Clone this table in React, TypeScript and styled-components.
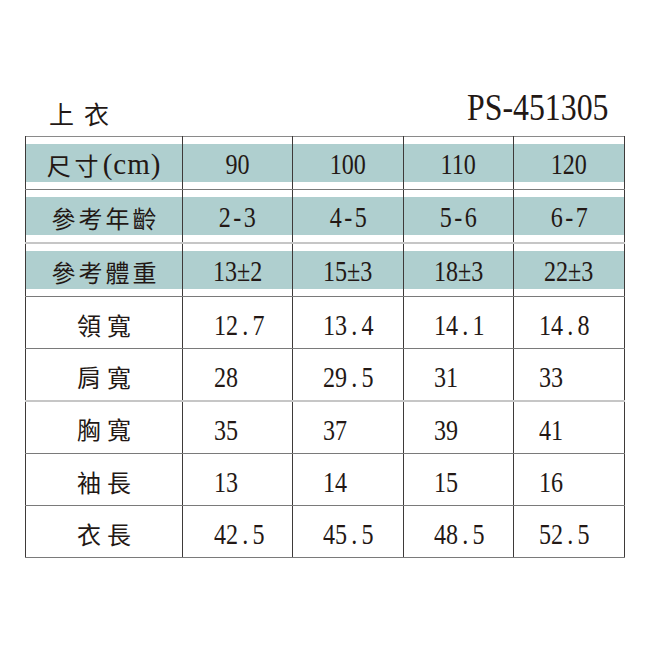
import React from "react";
import styled, { createGlobalStyle } from "styled-components";

const CJK = `"Noto Sans CJK TC", "Noto Sans CJK SC", sans-serif`;
const SERIF = `"Liberation Serif", "DejaVu Serif", serif`;
const INK = "#231815";
const TEAL = "#afcfcf";
const DARK = "#3e3a39";

const Global = createGlobalStyle`
  html, body { margin: 0; padding: 0; background: #ffffff; }
  body { width: 650px; height: 650px; overflow: hidden; }
`;

const Page = styled.div`
  padding: 86px 0 0 25px;
  width: 599px;
  color: ${INK};
`;

const TitleBar = styled.div`
  display: flex;
  justify-content: space-between;
  align-items: flex-end;
  height: 40px;
  padding: 0 16px 0 24px;
  margin-bottom: 10px;
`;

const Title = styled.h1`
  margin: 0;
  font-family: ${CJK};
  font-weight: 400;
  font-size: 25px;
  letter-spacing: 10px;
  line-height: 1;
`;

const Code = styled.span`
  display: inline-block;
  font-family: ${SERIF};
  font-size: 37px;
  line-height: 1;
  transform: scaleX(0.86);
  transform-origin: right bottom;
`;

const Table = styled.table`
  border-collapse: collapse;
  table-layout: fixed;
  width: 599px;
  border-left: 1.5px solid ${DARK};
  border-right: 1.5px solid ${DARK};
  border-top: 1px solid #8a8a8a;
  border-bottom: 1.5px solid ${DARK};
`;

const Row = styled.tr<{ $light?: boolean }>`
  height: 52.3px;
  & > td {
    border-bottom: ${(p) => (p.$light ? "2px solid #c6c6c6" : "1px solid #7a7a7a")};
  }
`;

const HeadCell = styled.td`
  padding: 7px 0;
  border-left: 1.5px solid ${DARK};
  vertical-align: middle;
`;

const Band = styled.div`
  height: 38px;
  background: ${TEAL};
  display: flex;
  align-items: center;
  justify-content: center;
  padding-top: 3px;
  box-sizing: border-box;
`;

const BodyCell = styled.td<{ $align: "left" | "center"; $pad?: number }>`
  padding: 6px 0 0 ${(p) => p.$pad ?? 0}px;
  border-left: 1.5px solid ${DARK};
  vertical-align: middle;
  text-align: ${(p) => p.$align};
`;

const Label = styled.span<{ $spacing: number }>`
  display: inline-block;
  font-family: ${CJK};
  font-size: 24px;
  line-height: 1;
  letter-spacing: ${(p) => p.$spacing}px;
  margin-right: ${(p) => -p.$spacing}px;
`;

const Num = styled.span<{ $origin: string }>`
  display: inline-block;
  font-family: ${SERIF};
  font-size: 29px;
  line-height: 1;
  white-space: nowrap;
  transform: scaleX(0.83);
  transform-origin: ${(p) => p.$origin};
`;

const Unit = styled.span`
  display: inline-block;
  margin-left: 4px;
  font-family: ${SERIF};
  font-size: 29px;
  line-height: 1;
  letter-spacing: 1px;
  white-space: nowrap;
`;

const Gap = styled.span`
  margin: 0 5px;
`;

const Dash = styled.span`
  margin: 0 3px;
`;

function renderNum(s: string) {
  return s.split("").map((ch, i) => {
    if (ch === ".") return <Gap key={i}>.</Gap>;
    if (ch === "-") return <Dash key={i}>-</Dash>;
    return <React.Fragment key={i}>{ch}</React.Fragment>;
  });
}

const cols = [157, 110, 111, 110, 111];

const headRows = [
  { label: "參考年齡", values: ["2-3", "4-5", "5-6", "6-7"], light: true },
  { label: "參考體重", values: ["13±2", "15±3", "18±3", "22±3"] },
];

const bodyRows = [
  { label: "領寬", values: ["12.7", "13.4", "14.1", "14.8"] },
  { label: "肩寬", values: ["28", "29.5", "31", "33"], light: true },
  { label: "胸寬", values: ["35", "37", "39", "41"] },
  { label: "袖長", values: ["13", "14", "15", "16"] },
  { label: "衣長", values: ["42.5", "45.5", "48.5", "52.5"] },
];

const sizes = ["90", "100", "110", "120"];
const pads = [31, 30, 30, 25];

export default function App() {
  return (
    <>
      <Global />
      <Page>
        <TitleBar>
          <Title>上衣</Title>
          <Code>PS-451305</Code>
        </TitleBar>
        <Table>
          <colgroup>
            {cols.map((w, i) => (
              <col key={i} style={{ width: w }} />
            ))}
          </colgroup>
          <tbody>
            <Row>
              <HeadCell>
                <Band>
                  <Label $spacing={4}>尺寸</Label>
                  <Unit>(cm)</Unit>
                </Band>
              </HeadCell>
              {sizes.map((v) => (
                <HeadCell key={v}>
                  <Band>
                    <Num $origin="center">{v}</Num>
                  </Band>
                </HeadCell>
              ))}
            </Row>
            {headRows.map((r) => (
              <Row key={r.label} $light={r.light}>
                <HeadCell>
                  <Band>
                    <Label $spacing={3}>{r.label}</Label>
                  </Band>
                </HeadCell>
                {r.values.map((v) => (
                  <HeadCell key={v}>
                    <Band>
                      <Num $origin="center">{renderNum(v)}</Num>
                    </Band>
                  </HeadCell>
                ))}
              </Row>
            ))}
            {bodyRows.map((r) => (
              <Row key={r.label} $light={r.light}>
                <BodyCell $align="center">
                  <Label $spacing={6}>{r.label}</Label>
                </BodyCell>
                {r.values.map((v, i) => (
                  <BodyCell key={i} $align="left" $pad={pads[i]}>
                    <Num $origin="left center">{renderNum(v)}</Num>
                  </BodyCell>
                ))}
              </Row>
            ))}
          </tbody>
        </Table>
      </Page>
    </>
  );
}
